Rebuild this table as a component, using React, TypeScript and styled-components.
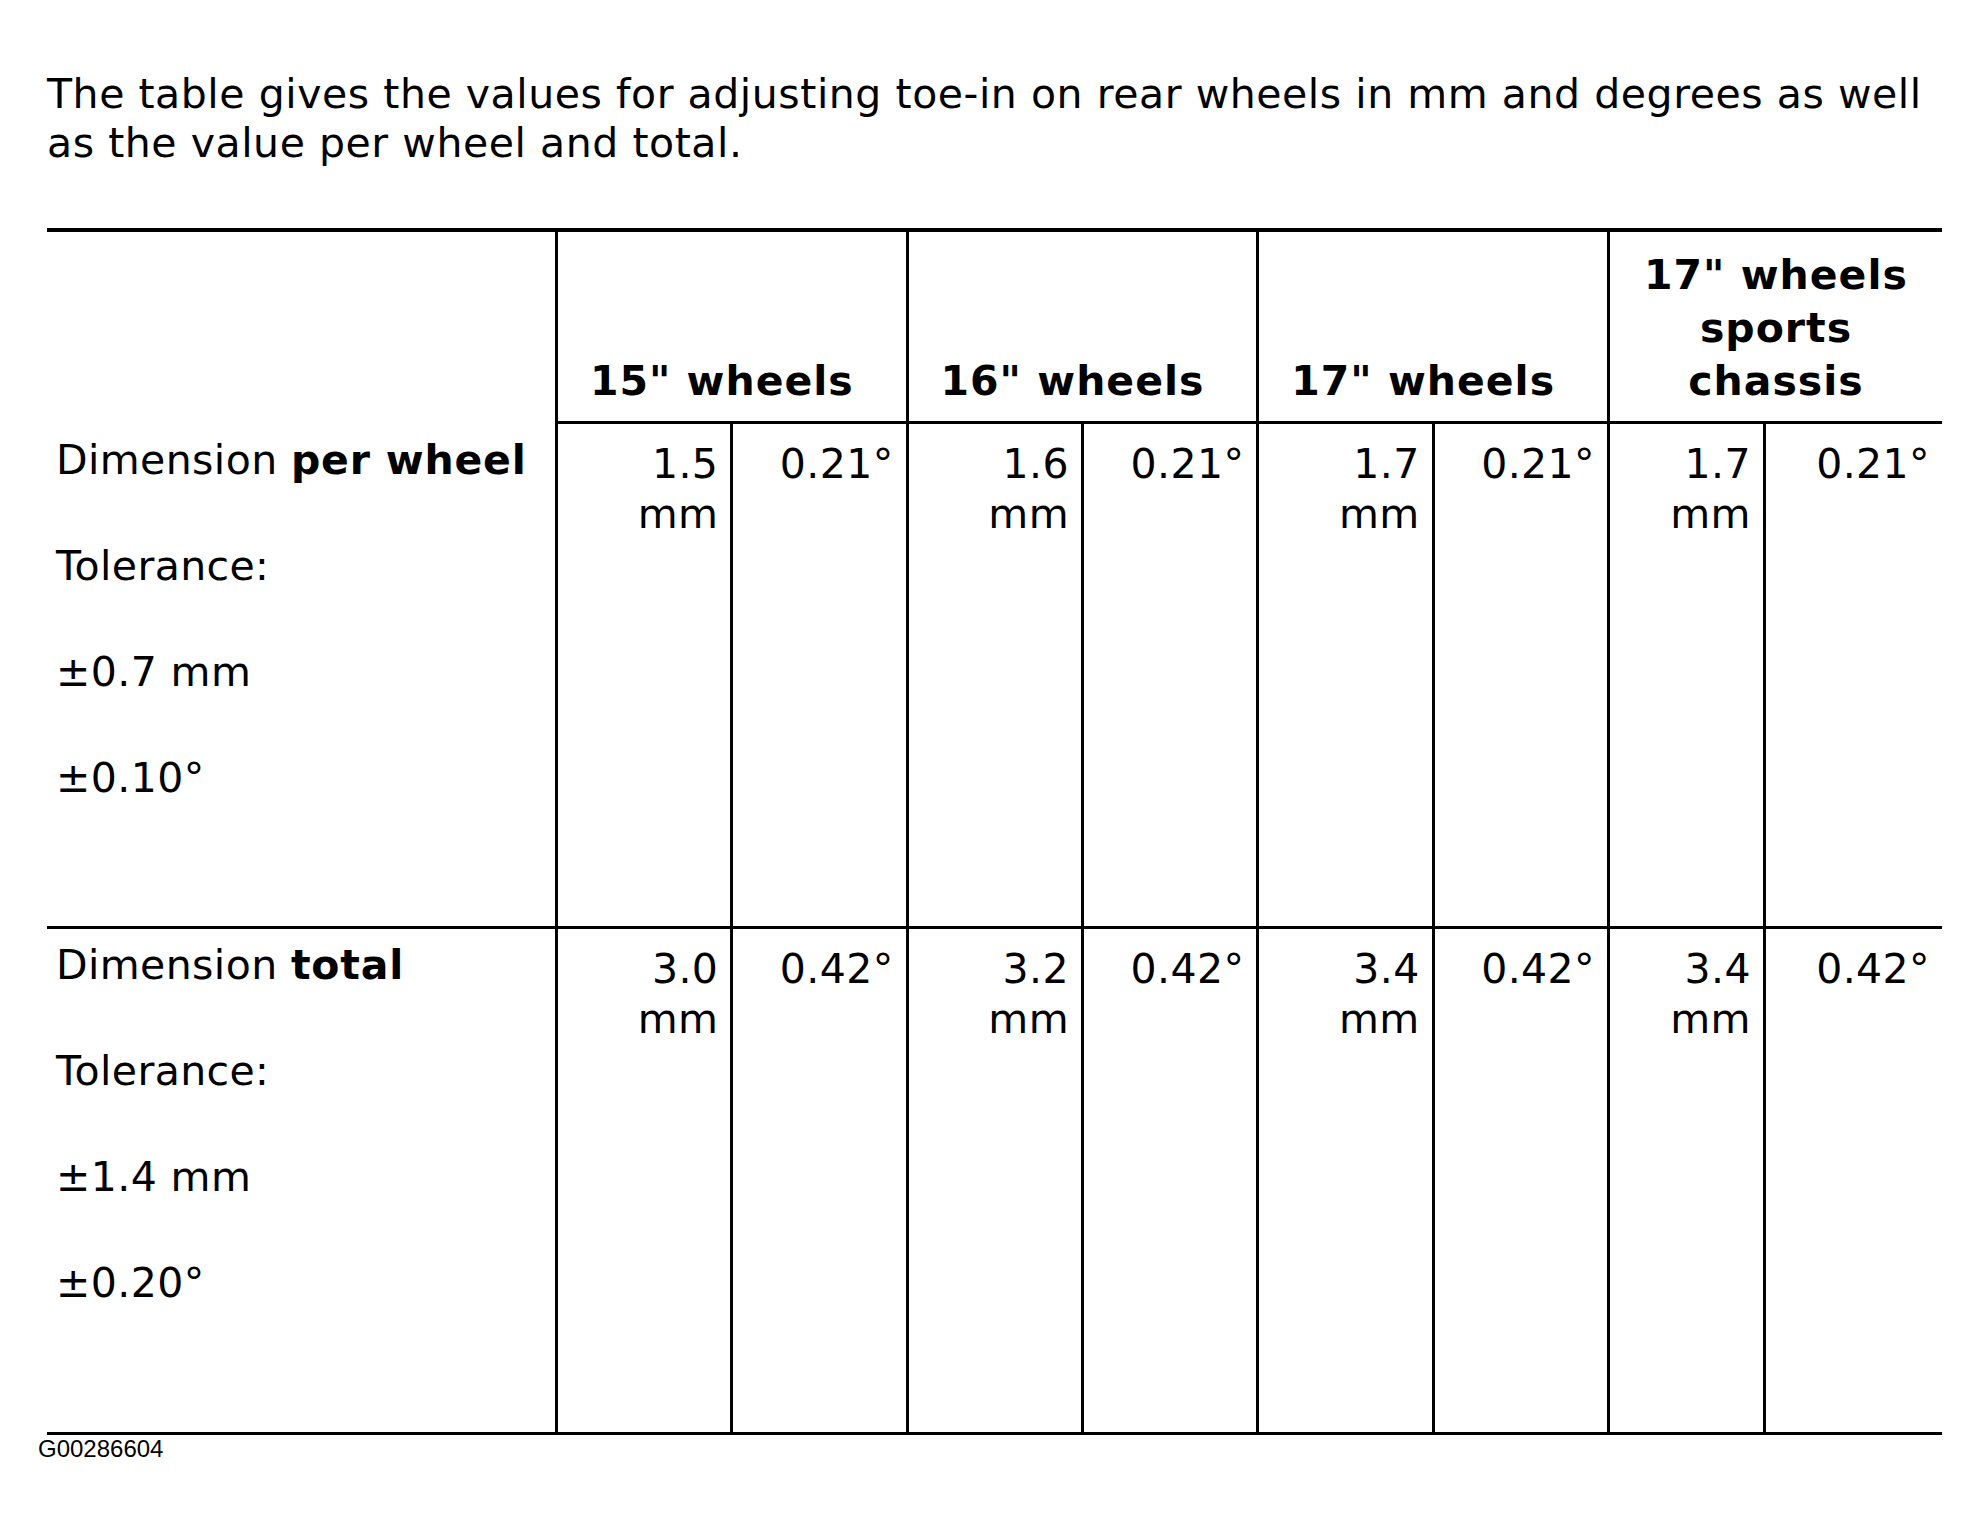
import React from 'react';
import styled, { createGlobalStyle } from 'styled-components';

type Group = {
  title: string[];
  perWheel: [string, string];
  total: [string, string];
};

type Row = {
  key: 'perWheel' | 'total';
  lead: string;
  bold: string;
  tolerances: string[];
};

const groups: Group[] = [
  { title: ['15" wheels'], perWheel: ['1.5', '0.21°'], total: ['3.0', '0.42°'] },
  { title: ['16" wheels'], perWheel: ['1.6', '0.21°'], total: ['3.2', '0.42°'] },
  { title: ['17" wheels'], perWheel: ['1.7', '0.21°'], total: ['3.4', '0.42°'] },
  {
    title: ['17" wheels', 'sports', 'chassis'],
    perWheel: ['1.7', '0.21°'],
    total: ['3.4', '0.42°'],
  },
];

const rows: Row[] = [
  { key: 'perWheel', lead: 'Dimension ', bold: 'per wheel', tolerances: ['±0.7 mm', '±0.10°'] },
  { key: 'total', lead: 'Dimension ', bold: 'total', tolerances: ['±1.4 mm', '±0.20°'] },
];

export default function App() {
  return (
    <>
      <GlobalStyle />
      <Page>
        <Intro>
          The table gives the values for adjusting toe-in on rear wheels in mm and degrees as well
          as the value per wheel and total.
        </Intro>
        <Table>
          <Corner />
          {groups.map((g, i) => (
            <GroupHeader key={i} $inset={i < groups.length - 1 ? 20 : 0}>
              {g.title.map((line, j) => (
                <HeaderLine key={j}>{line}</HeaderLine>
              ))}
            </GroupHeader>
          ))}
          {rows.map((row, r) => (
            <React.Fragment key={row.key}>
              <LabelCell $divider={r > 0}>
                <LabelLine>
                  {row.lead}
                  <Strong>{row.bold}</Strong>
                </LabelLine>
                <LabelLine>Tolerance:</LabelLine>
                {row.tolerances.map((t) => (
                  <LabelLine key={t}>{t}</LabelLine>
                ))}
              </LabelCell>
              {groups.map((g, i) => (
                <React.Fragment key={i}>
                  <ValueCell $divider={r > 0}>
                    {g[row.key][0]}
                    <br />
                    mm
                  </ValueCell>
                  <ValueCell $divider={r > 0}>{g[row.key][1]}</ValueCell>
                </React.Fragment>
              ))}
            </React.Fragment>
          ))}
        </Table>
        <Footer>G00286604</Footer>
      </Page>
    </>
  );
}

/*
 * Styles
 */

const GlobalStyle = createGlobalStyle`
  html, body {
    margin: 0;
    padding: 0;
    background: #ffffff;
  }
  body {
    color: #000000;
    font-family: "DejaVu Sans", Verdana, sans-serif;
  }
`;

const Page = styled.div`
  width: 1980px;
  min-height: 1534px;
  padding-top: 70px;
  box-sizing: border-box;
`;

const Intro = styled.p`
  margin: 0 0 0 47px;
  width: 1895px;
  font-size: 41px;
  line-height: 49px;
  letter-spacing: 0.55px;
`;

const Table = styled.div`
  margin: 60px 0 0 47px;
  width: 1895px;
  display: grid;
  grid-template-columns: 508px repeat(6, 175.33px) 156px 179px;
  grid-template-rows: 192px 502px 506px;
  border-top: 4px solid #000;
  border-bottom: 3px solid #000;
  font-size: 41px;
  letter-spacing: 0.4px;
`;

const Corner = styled.div``;

const GroupHeader = styled.div<{ $inset: number }>`
  grid-column: span 2;
  display: flex;
  flex-direction: column;
  justify-content: flex-end;
  align-items: center;
  padding: 0 ${({ $inset }) => $inset}px 13px 0;
  border-left: 3px solid #000;
  border-bottom: 3px solid #000;
  font-weight: bold;
  line-height: 53px;
  letter-spacing: 1px;
  text-align: center;
`;

const HeaderLine = styled.span`
  white-space: nowrap;
`;

const LabelCell = styled.div<{ $divider: boolean }>`
  display: flex;
  flex-direction: column;
  gap: 56px;
  padding: 11px 0 0 9px;
  border-top: ${({ $divider }) => ($divider ? '3px solid #000' : 'none')};
  line-height: 50px;
`;

const LabelLine = styled.div`
  white-space: nowrap;
`;

const Strong = styled.b`
  letter-spacing: 0.8px;
`;

const ValueCell = styled.div<{ $divider: boolean }>`
  padding: 15px 12px 0 0;
  border-left: 3px solid #000;
  border-top: ${({ $divider }) => ($divider ? '3px solid #000' : 'none')};
  line-height: 50px;
  text-align: right;
`;

const Footer = styled.div`
  margin-left: 38px;
  font-family: "Liberation Sans", Arial, sans-serif;
  font-size: 24px;
  line-height: 28px;
`;
